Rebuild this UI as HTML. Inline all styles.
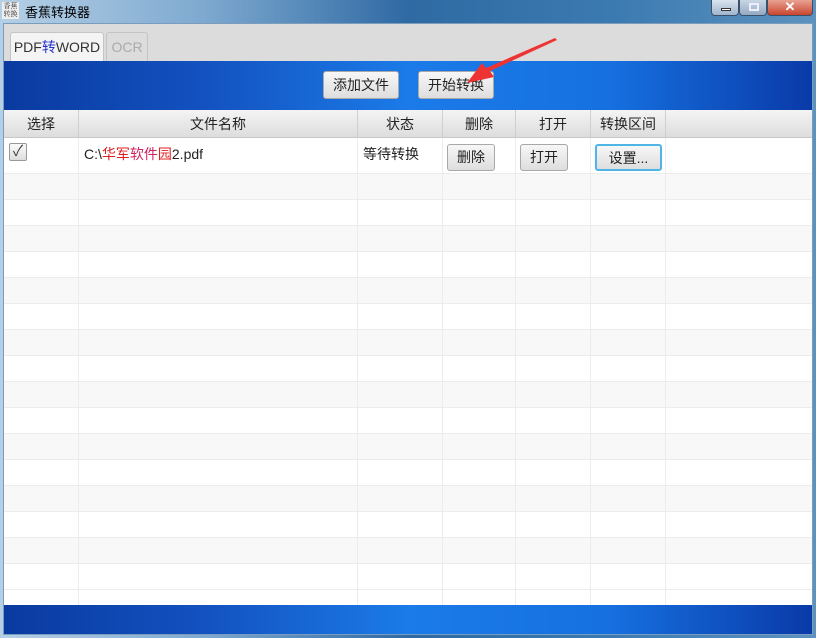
<!DOCTYPE html><html><head><meta charset="utf-8"><style>
*{margin:0;padding:0;box-sizing:border-box}
body{width:816px;height:638px;overflow:hidden;font-family:"Liberation Sans","Noto Sans CJK SC",sans-serif;font-size:14px;color:#222;position:relative;background:linear-gradient(90deg,#b5d0e6 0%,#7ea9d0 25%,#2f6aa3 50%,#3b7ab0 75%,#5d92bf 100%)}
.abs{position:absolute}
.title{left:25px;top:2px;font-size:13px;color:#000}
.icon{left:2px;top:2px;width:17px;height:17px;background:#eee;font-size:7px;line-height:8px;color:#333;text-align:center;font-family:"Noto Serif CJK SC",serif}
.ctrl{top:0;height:16px;border:1px solid #3a4f68;border-top:none;border-radius:0 0 4px 4px}
.win{left:3px;top:23px;width:810px;height:612px;background:#dcdcdc;border:1px solid #7a9cbd;overflow:hidden}
.tab{top:8px;height:30px;border:1px solid #c4c4c4;border-bottom:none;border-radius:3px 3px 0 0;text-align:center;line-height:28px;font-size:14px}
.blue{background:linear-gradient(90deg,#0a3aa0 0%,#1352c0 25%,#1b7be8 50%,#1670e0 75%,#0a3aa8 100%)}
.btn{height:28px;border:1px solid #a8a8a8;border-radius:3px;background:linear-gradient(#f7f7f7,#dedede);text-align:center;line-height:26px;font-size:14px}
.th{top:86px;height:28px;background:linear-gradient(#f4f4f4,#dddddd);border-right:1px solid #cfcfcf;border-bottom:1px solid #c8c8c8;text-align:center;line-height:28px}
.row{left:0;width:808px;height:26px;border-bottom:1px solid #ececec}
.vl{top:114px;width:1px;height:467px;background:#ececec}
</style></head><body>
<div class="abs icon">香蕉<br>转换</div>
<div class="abs title">香蕉转换器</div>
<div class="abs ctrl" style="left:711px;width:28px;background:linear-gradient(#d9e4f0,#9fb4cc)"><div style="position:absolute;left:9px;top:8px;width:10px;height:3px;background:#fff;border:1px solid #333"></div></div>
<div class="abs ctrl" style="left:739px;width:28px;background:linear-gradient(#c9d6e4,#93a9c2)"><div style="position:absolute;left:9px;top:3px;width:10px;height:8px;border:2px solid #eef"></div></div>
<div class="abs ctrl" style="left:767px;width:46px;background:linear-gradient(#e8a393,#c9452f);color:#fff;text-align:center;font-weight:bold;font-size:13px;line-height:14px">✕</div>
<div class="abs win">
 <div class="abs tab" style="left:6px;width:94px;background:#f4f4f4;color:#333">PDF<span style="color:#2233cc">转</span>WORD</div>
 <div class="abs tab" style="left:102px;width:42px;background:#dcdcdc;color:#aaa">OCR</div>
 <div class="abs blue" style="left:0;top:37px;width:808px;height:49px"></div>
 <div class="abs btn" style="left:319px;top:47px;width:76px">添加文件</div>
 <div class="abs btn" style="left:414px;top:47px;width:76px">开始转换</div>
 <svg class="abs" style="left:455px;top:14px" width="100" height="50"><path d="M98 2 L31 33 L35 39 L8 45 L23 25 L27 30 L96 0 Z" fill="#ee3333"/></svg>
 <div class="abs" style="left:0;top:86px;width:808px;height:495px;background:#fff"></div>
 <div class="abs th" style="left:0;width:75px">选择</div>
 <div class="abs th" style="left:75px;width:279px">文件名称</div>
 <div class="abs th" style="left:354px;width:85px">状态</div>
 <div class="abs th" style="left:439px;width:73px">删除</div>
 <div class="abs th" style="left:512px;width:75px">打开</div>
 <div class="abs th" style="left:587px;width:75px">转换区间</div>
 <div class="abs th" style="left:662px;width:146px;border-right:none"></div>
 <div class="abs row" style="top:114px;height:36px;background:#fff"></div>
 <div id="rows"></div>
 <div class="abs vl" style="left:74px"></div><div class="abs vl" style="left:353px"></div><div class="abs vl" style="left:438px"></div><div class="abs vl" style="left:511px"></div><div class="abs vl" style="left:586px"></div><div class="abs vl" style="left:661px"></div>
 <div class="abs" style="left:5px;top:119px;width:18px;height:18px;border:1px solid #999;border-radius:2px;background:linear-gradient(#fafafa,#ddd);font-size:15px;line-height:16px;text-align:center;color:#444">✓</div>
 <div class="abs" style="left:80px;top:120px">C:\<span style="color:#e02020">华军</span><span style="color:#d02060">软件</span><span style="color:#e02020">园</span>2.pdf</div>
 <div class="abs" style="left:359px;top:120px">等待转换</div>
 <div class="abs btn" style="left:443px;top:120px;width:48px;height:27px;line-height:25px">删除</div>
 <div class="abs btn" style="left:516px;top:120px;width:48px;height:27px;line-height:25px">打开</div>
 <div class="abs btn" style="left:591px;top:120px;width:67px;height:27px;line-height:24px;border:2px solid #4fb4e6">设置...</div>
 <div class="abs blue" style="left:0;top:581px;width:808px;height:29px"></div>
</div>
<script>
var h='';for(var k=0;k<16;k++){var t=150+26*k;if(t>=581)break;var hh=Math.min(26,581-t);h+='<div class="abs row" style="top:'+t+'px;height:'+hh+'px;background:'+(k%2==0?'#f8f8f8':'#fff')+'"></div>';}
document.getElementById('rows').outerHTML=h;
</script>
</body></html>
